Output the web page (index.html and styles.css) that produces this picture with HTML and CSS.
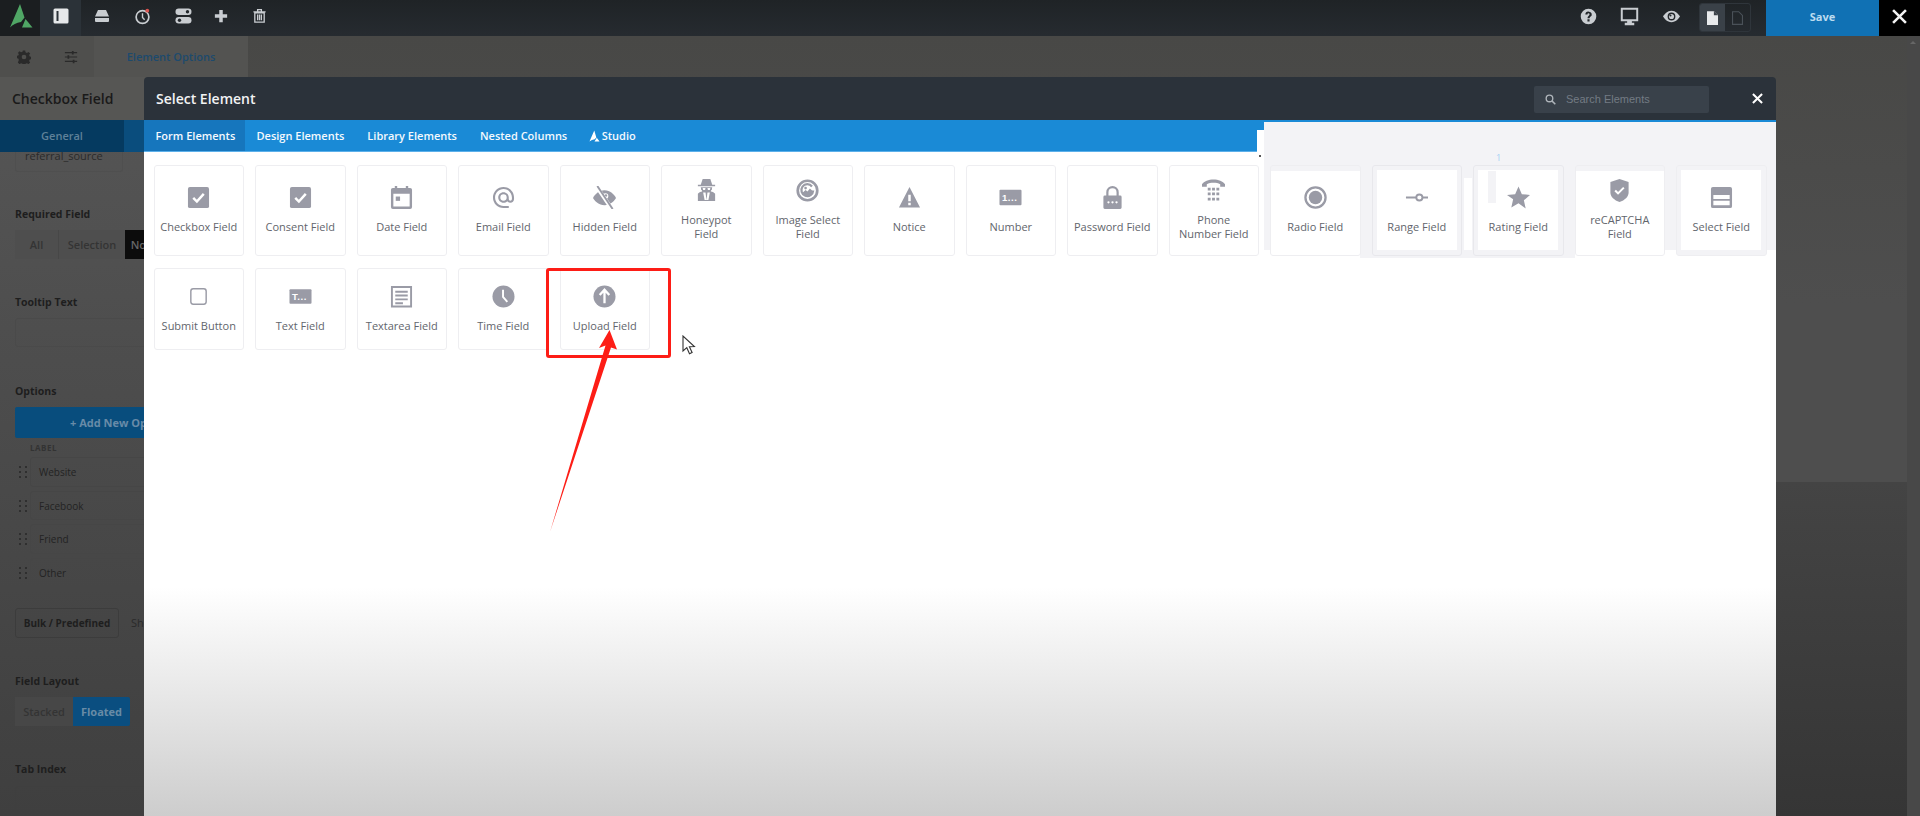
FILE: index.html
```html
<!DOCTYPE html>
<html lang="en">
<head>
<meta charset="utf-8">
<title>Select Element</title>
<link rel="stylesheet" href="styles.css">
</head>
<body>
<header class="topbar">
  <div class="logo-cell">
    <svg class="logo" viewBox="0 0 40 36" width="40" height="36"><path d="M20 4 24.500 17.500 21 22Q14 23 10 27.500z"/><path d="M25.500 19 32.500 27.500H22z"/></svg>
  </div>
  <div class="tool tool-active"><svg viewBox="0 0 16 16" width="16" height="16"><rect x="0.500" y="0.500" width="15" height="15" rx="1.500" fill="#e6e8ea"/><rect x="3.500" y="3" width="2" height="10" fill="#2b3238"/></svg></div>
  <div class="tool"><svg viewBox="0 0 16 16" width="16" height="16"><path fill="#c9cdd1" d="M4 2h8l3 6.500H1zM1 10h14v3a1 1 0 0 1-1 1H2a1 1 0 0 1-1-1z"/></svg></div>
  <div class="tool"><svg viewBox="0 0 16 16" width="17" height="17"><circle cx="8" cy="8.500" r="6" fill="none" stroke="#c9cdd1" stroke-width="1.600"/><path d="M8 5v4l2 2" fill="none" stroke="#c9cdd1" stroke-width="1.300"/><circle cx="12.500" cy="2.500" r="1.800" fill="#d9534f"/></svg></div>
  <div class="tool"><svg viewBox="0 0 16 16" width="17" height="16"><rect y="0.500" width="16" height="6.500" rx="3.200" fill="#c9cdd1"/><rect y="9" width="16" height="6.500" rx="3.200" fill="#c9cdd1"/><circle cx="12" cy="3.700" r="1.700" fill="#23282c"/><circle cx="4" cy="12.300" r="1.700" fill="#23282c"/></svg></div>
  <div class="tool tool-narrow tool-plus"><svg viewBox="0 0 16 16" width="14" height="14"><path fill="#c9cdd1" d="M6 1h4v5h5v4h-5v5H6v-5H1V6h5z"/></svg></div>
  <div class="tool tool-narrow"><svg viewBox="0 0 16 16" width="15" height="16"><path fill="none" stroke="#c9cdd1" stroke-width="1.400" d="M3 4.500h10v10H3zM1.500 3.500h13M6 3V1.200h4V3M6 6.500v6M8 6.500v6M10 6.500v6"/></svg></div>
  <div class="top-spacer"></div>
  <div class="top-right">
    <svg class="tr-icon" viewBox="0 0 24 24" width="17" height="17"><path fill="#c9cdd1" d="M12 1a11 11 0 1 0 0 22 11 11 0 0 0 0-22zm1.500 18h-3v-3h3zm2.800-8.200c-.9 1.100-2.800 1.700-2.800 3.700h-3c0-3.300 3-3.600 3-5.500a1.500 1.500 0 0 0-3 0h-3a4.500 4.500 0 1 1 8.800 1.800z"/></svg>
    <svg class="tr-icon" viewBox="0 0 24 24" width="19" height="19"><path fill="#c9cdd1" d="M1 1h22v17h-8v2h3v3H6v-3h3v-2H1zm2.500 2.500v12h17v-12z"/></svg>
    <svg class="tr-icon" viewBox="0 0 24 24" width="19" height="17"><path fill="#c9cdd1" d="M12 4C6 4 2 9 0 12c2 3 6 8 12 8s10-5 12-8c-2-3-6-8-12-8zm0 13.500a5.500 5.500 0 1 1 0-11 5.500 5.500 0 0 1 0 11z"/><circle cx="12" cy="12" r="3.600" fill="#c9cdd1"/><circle cx="10.500" cy="10.500" r="1.500" fill="#23282c"/></svg>
    <div class="doc-group">
      <div class="doc-cell doc-on"><svg viewBox="0 0 12 15" width="11" height="14"><path fill="#e8eaec" d="M0 0h7.500L12 4.500V15H0z"/><path fill="#3a4148" d="M7.500 0v4.500H12z"/></svg></div>
      <div class="doc-cell"><svg viewBox="0 0 12 15" width="11" height="14"><path fill="none" stroke="#4a5158" stroke-width="1.200" d="M.6.600h6.700l4.100 4.100v9.700H.6z"/></svg></div>
    </div>
  </div>
  <button class="save">Save</button>
  <div class="close-all"><svg viewBox="0 0 14 14" width="15" height="15"><path d="M1 1l12 12M13 1 1 13" stroke="#f2f2f2" stroke-width="2.400"/></svg></div>
</header>

<div class="workspace">
  <aside class="sidebar">
    <div class="side-top">
      <div class="side-ico"><svg viewBox="0 0 24 24" width="14" height="14"><path fill="#2a2a2a" d="M10 1h4l.6 3 2.500 1 2.600-1.700 2.800 2.800-1.700 2.600 1 2.500 3 .6v4l-3 .6-1 2.500 1.700 2.600-2.800 2.800-2.600-1.700-2.500 1-.6 3h-4l-.6-3-2.500-1-2.600 1.700-2.800-2.800L3.200 17l-1-2.500-3-.6v-4l3-.6 1-2.500L1.500 5.100l2.800-2.800L7 4l2.500-1zM12 8a4 4 0 1 0 0 8 4 4 0 0 0 0-8z"/></svg></div>
      <div class="side-ico"><svg viewBox="0 0 16 16" width="14" height="14"><path stroke="#2a2a2a" stroke-width="1.300" d="M1 3h14M1 8h14M1 13h14"/><path fill="#2a2a2a" d="M9 1h2v4H9zM4 6h2v4H4zM10 11h2v4h-2z"/></svg></div>
      <div class="side-tab">Element Options</div>
    </div>
    <h2 class="side-title">Checkbox Field</h2>
    <div class="side-band"><span class="band-tab">General</span><span class="band-rest"></span></div>
    <div class="side-form">
      <div class="field-name">referral_source</div>
      <div class="flabel fl-required">Required Field</div>
      <div class="seg seg-req"><span class="seg-all">All</span><span class="seg-sel">Selection</span><span class="seg-none">None</span></div>
      <div class="flabel fl-tooltip">Tooltip Text</div>
      <div class="finput fi-tooltip"></div>
      <div class="flabel fl-options">Options</div>
      <div class="add-btn">+ Add New Option</div>
      <div class="col-label">LABEL</div>
      <div class="opt-rows">
        <div class="opt"><svg class="drag" viewBox="0 0 8 12" width="8" height="12"><path fill="#2f2f2f" d="M0 0h2v2H0zM6 0h2v2H6zM0 5h2v2H0zM6 5h2v2H6zM0 10h2v2H0zM6 10h2v2H6z"/></svg><span class="opt-in">Website</span></div>
        <div class="opt"><svg class="drag" viewBox="0 0 8 12" width="8" height="12"><path fill="#2f2f2f" d="M0 0h2v2H0zM6 0h2v2H6zM0 5h2v2H0zM6 5h2v2H6zM0 10h2v2H0zM6 10h2v2H6z"/></svg><span class="opt-in">Facebook</span></div>
        <div class="opt"><svg class="drag" viewBox="0 0 8 12" width="8" height="12"><path fill="#2f2f2f" d="M0 0h2v2H0zM6 0h2v2H6zM0 5h2v2H0zM6 5h2v2H6zM0 10h2v2H0zM6 10h2v2H6z"/></svg><span class="opt-in">Friend</span></div>
        <div class="opt"><svg class="drag" viewBox="0 0 8 12" width="8" height="12"><path fill="#2f2f2f" d="M0 0h2v2H0zM6 0h2v2H6zM0 5h2v2H0zM6 5h2v2H6zM0 10h2v2H0zM6 10h2v2H6z"/></svg><span class="opt-in">Other</span></div>
      </div>
      <div class="bulk-row"><span class="bulk">Bulk / Predefined</span><span class="bulk-more">Show</span></div>
      <div class="flabel fl-layout">Field Layout</div>
      <div class="seg seg-layout"><span class="seg-stacked">Stacked</span><span class="seg-floated">Floated</span></div>
      <div class="flabel fl-tab">Tab Index</div>
      <div class="finput fi-tab"></div>
    </div>
  </aside>

  <main class="canvas">
    <div class="canvas-main">
      <div class="canvas-upper"></div>
      <div class="canvas-lower"></div>
    </div>
    <div class="canvas-track"><span class="track-arrow"></span></div>
  </main>

  <section class="modal">
    <div class="modal-head">
      <h1 class="modal-title">Select Element</h1>
      <div class="search">
        <svg viewBox="0 0 16 16" width="11" height="11"><circle cx="6.500" cy="6.500" r="4.800" fill="none" stroke="#aeb4ba" stroke-width="2"/><path d="M10 10l5 5" stroke="#aeb4ba" stroke-width="2.200"/></svg>
        <span class="search-text">Search Elements</span>
      </div>
      <svg class="modal-x" viewBox="0 0 12 12" width="11" height="11"><path d="M1 1l10 10M11 1 1 11" stroke="#fff" stroke-width="2.200"/></svg>
    </div>
    <nav class="tabs">
      <span class="tab tab-active">Form Elements</span>
      <span class="tab">Design Elements</span>
      <span class="tab">Library Elements</span>
      <span class="tab">Nested Columns</span>
      <span class="tab tab-studio"><svg viewBox="0 0 24 24" width="11" height="12"><path fill="#fff" d="M11.500 0 16 15 12.500 19Q6 20 1 24zM17 16l6 8H12z"/></svg>Studio</span>
    </nav>

    <div class="glitch glitch-main"></div>
    <div class="glitch glitch-low"></div>
    <div class="glitch-white glitch-tabend"></div>
    <div class="glitch-white glitch-gap"></div>
    <div class="glitch-speck"></div>
    <div class="glitch-one">1</div>

    <div class="modal-body">
      <div class="grid">
        <div class="card"><svg viewBox="0 0 24 24"><rect x="1" y="1" width="22" height="22" rx="2" fill="#9a9ba6"/><path d="M6.500 12.500l3.800 3.700 7.200-8" fill="none" stroke="#fff" stroke-width="2.600"/></svg><span class="label">Checkbox Field</span></div>
        <div class="card"><svg viewBox="0 0 24 24"><rect x="1" y="1" width="22" height="22" rx="2" fill="#9a9ba6"/><path d="M6.500 12.500l3.800 3.700 7.200-8" fill="none" stroke="#fff" stroke-width="2.600"/></svg><span class="label">Consent Field</span></div>
        <div class="card"><svg viewBox="0 0 24 24"><path fill="#9a9ba6" fill-rule="evenodd" d="M5 0h2.500v2h9V0H19v2h2a2 2 0 0 1 2 2v18a2 2 0 0 1-2 2H3a2 2 0 0 1-2-2V4a2 2 0 0 1 2-2h2zM3.500 8v13.500h17V8z"/><rect x="6" y="11" width="4.500" height="4.500" fill="#9a9ba6"/></svg><span class="label">Date Field</span></div>
        <div class="card"><svg viewBox="0 0 24 24"><path fill="#9a9ba6" d="M12 1C5.900 1 1 5.900 1 12s4.900 11 11 11h5.500v-2.200H12c-4.800 0-8.800-4-8.800-8.800s4-8.800 8.800-8.800 8.800 4 8.800 8.800v1.600c0 .9-.8 1.700-1.700 1.700s-1.600-.8-1.600-1.700V12c0-3-2.500-5.500-5.500-5.500S6.500 9 6.500 12s2.500 5.500 5.500 5.500c1.500 0 2.900-.6 3.900-1.600.7 1 1.900 1.600 3.200 1.600 2.200 0 3.900-1.700 3.900-3.900V12c0-6.100-4.900-11-11-11zm0 14.300a3.300 3.300 0 1 1 0-6.600 3.300 3.300 0 0 1 0 6.600z"/></svg><span class="label">Email Field</span></div>
        <div class="card"><svg viewBox="0 0 24 24"><path fill="#9a9ba6" d="M12 4.500C6 4.500 2 9 0 12.500c2 3.500 6 7.500 12 7.500s10-4 12-7.500C22 9 18 4.500 12 4.500z"/><circle cx="13" cy="10.500" r="3" fill="#fff"/><circle cx="13.500" cy="10" r="1.300" fill="#9a9ba6"/><path d="M4 1l15 22" stroke="#fff" stroke-width="4"/><path d="M4.500 0l16 24" stroke="#9a9ba6" stroke-width="2"/></svg><span class="label">Hidden Field</span></div>
        <div class="card"><svg viewBox="0 0 24 24"><path fill="#9a9ba6" d="M8 0h8l2 6h3v1.500H3V6h3zM6 8.500h12l-.5 3H17l-.5 1.500c2 .2 3.500 1 4.500 2.500V23H3v-7.500c1-1.500 2.500-2.300 4.500-2.500L7 11.500h-.5z"/><path fill="#fff" d="M8 9.500h3l-.5 2H8.500zM13 9.500h3l-.5 2h-2zM8.500 14h2.500l1 8H10zM15.500 14H13l-1 8h2z"/></svg><span class="label">Honeypot<br>Field</span></div>
        <div class="card"><svg viewBox="0 0 24 24"><circle cx="12" cy="12" r="10.200" fill="none" stroke="#9a9ba6" stroke-width="2.800"/><path fill="none" stroke="#9a9ba6" stroke-width="2.300" d="M18 12a6.200 6.200 0 1 1-1.300-4.200"/><path fill="#9a9ba6" d="M6.500 14.500l3.500-3 2 1.500 2.500-3L18 13c-.5 3-3 5.500-6 5.500-2.500 0-4.500-1.600-5.500-4z"/><circle cx="10" cy="9.500" r="1.400" fill="#9a9ba6"/></svg><span class="label">Image Select<br>Field</span></div>
        <div class="card"><svg viewBox="0 0 24 24"><path fill="#9a9ba6" d="M12 1 1 22.500h22zM10.700 9h2.600v7h-2.600zm0 8.500h2.600v2.500h-2.600z" fill-rule="evenodd"/></svg><span class="label">Notice</span></div>
        <div class="card"><svg viewBox="0 0 24 24"><rect x="0.500" y="4" width="23" height="16" rx="1" fill="#9a9ba6"/><text class="icon-txt" x="3" y="16" >1...</text></svg><span class="label">Number</span></div>
        <div class="card"><svg viewBox="0 0 24 24"><path fill="#9a9ba6" fill-rule="evenodd" d="M12 0a6.500 6.500 0 0 1 6.500 6.500V10H20a1.500 1.500 0 0 1 1.500 1.500v11A1.500 1.500 0 0 1 20 24H4a1.500 1.500 0 0 1-1.500-1.500v-11A1.500 1.500 0 0 1 4 10h1.500V6.500A6.500 6.500 0 0 1 12 0zm0 2.300A4.200 4.200 0 0 0 7.800 6.500V10h8.400V6.500A4.200 4.200 0 0 0 12 2.300z"/><circle cx="7.800" cy="17" r="1.200" fill="#fff"/><circle cx="12" cy="17" r="1.200" fill="#fff"/><circle cx="16.200" cy="17" r="1.200" fill="#fff"/></svg><span class="label">Password Field</span></div>
        <div class="card"><svg viewBox="0 0 24 24"><path fill="#9a9ba6" d="M0 8V5.500C2 2.500 7 .5 12 .5s10 2 12 5V8h-5V5.500C17 4.500 14.500 4 12 4s-5 .5-7 1.500V8z"/><path fill="#9a9ba6" d="M6 9h3v3H6zm4.500 0h3v3h-3zM15 9h3v3h-3zM6 14h3v3H6zm4.500 0h3v3h-3zM15 14h3v3h-3zM6 19.500h3v3H6zm9 0h3v3h-3zm-4.500 0h3v3h-3z"/></svg><span class="label">Phone<br>Number Field</span></div>
        <div class="card card-radio"><svg viewBox="0 0 24 24"><circle cx="12" cy="12" r="10.500" fill="none" stroke="#9a9ba6" stroke-width="2.400"/><circle cx="12" cy="12" r="7" fill="#9a9ba6"/></svg><span class="label">Radio Field</span></div>
        <div class="card card-inset"><svg viewBox="0 0 24 24"><path d="M1 12h23" stroke="#9a9ba6" stroke-width="2"/><circle cx="15" cy="12" r="3.200" fill="#fff" stroke="#9a9ba6" stroke-width="2"/></svg><span class="label">Range Field</span></div>
        <div class="card card-inset card-rating"><svg viewBox="0 0 24 24"><path fill="#9a9ba6" d="M12 .5l3.500 8 8.500.8-6.400 5.600 1.900 8.500L12 18l-7.500 4.400 1.900-8.500L0 9.300l8.500-.8z"/></svg><span class="label">Rating Field</span></div>
        <div class="card card-top"><svg viewBox="0 0 24 24"><path fill="#9a9ba6" d="M12 0l9.500 3v11c0 4.500-4 8-9.500 10C6.500 22 2.500 18.500 2.500 14V3z"/><path d="M7.500 12l3 3 6-6" fill="none" stroke="#fff" stroke-width="2.200"/></svg><span class="label">reCAPTCHA<br>Field</span></div>
        <div class="card card-inset card-select"><svg viewBox="0 0 24 24"><path fill="#9a9ba6" fill-rule="evenodd" d="M3 1h18a2 2 0 0 1 2 2v18a2 2 0 0 1-2 2H3a2 2 0 0 1-2-2V3a2 2 0 0 1 2-2zM3.500 9.500v4h17v-4zm0 6v4.500h17v-4.500z"/></svg><span class="label">Select Field</span></div>

        <div class="card"><svg viewBox="0 0 24 24"><rect x="5" y="5" width="16" height="16" rx="2.500" transform="translate(-1 -1)" fill="none" stroke="#9a9ba6" stroke-width="1.500"/></svg><span class="label">Submit Button</span></div>
        <div class="card"><svg viewBox="0 0 24 24"><rect x="0.500" y="4.500" width="23" height="15" rx="1" fill="#9a9ba6"/><text class="icon-txt" x="3" y="16">T...</text></svg><span class="label">Text Field</span></div>
        <div class="card"><svg viewBox="0 0 24 24"><path fill="#9a9ba6" fill-rule="evenodd" d="M1 1h22v22.500H1zm2 2v18.500h18V3z"/><path fill="#9a9ba6" d="M5.500 6h13v2h-13zm0 4h13v2h-13zm0 4h13v2h-13zm0 4h8v2h-8z"/></svg><span class="label">Textarea Field</span></div>
        <div class="card"><svg viewBox="0 0 24 24"><circle cx="12" cy="12" r="11.500" fill="#9a9ba6"/><path d="M11.500 5v7.500l4.500 5" fill="none" stroke="#fff" stroke-width="2"/></svg><span class="label">Time Field</span></div>
        <div class="card"><svg viewBox="0 0 24 24"><circle cx="12" cy="12" r="11.500" fill="#9a9ba6"/><path d="M12 19V6M7 10.500 12 5l5 5.500" fill="none" stroke="#fff" stroke-width="2.400"/></svg><span class="label">Upload Field</span></div>
      </div>
    </div>
  </section>

  <div class="callout-box"></div>
  <svg class="callout-arrow" viewBox="0 0 80 210" width="80" height="210"><path fill="#fd1d16" d="M1 205 56.500 18.500 50 21 60.500 3 68 22.500 62 20.500z"/></svg>
  <svg class="cursor" viewBox="0 0 14 20" width="14" height="20"><path d="M1 1v15l3.800-3.300 2.700 6 2.600-1.200-2.700-5.700 5-.3z" fill="#fff" stroke="#333" stroke-width="1.100"/></svg>
</div>
</body>
</html>
```
FILE: styles.css
```css
* { box-sizing: border-box; }
html, body { margin: 0; height: 100%; }
body {
  width: 1920px;
  height: 816px;
  overflow: hidden;
  display: flex;
  flex-direction: column;
  font-family: "Open Sans", "Noto Sans", sans-serif;
  background: #444;
}

/* top bar */
.topbar {
  height: 36px;
  flex: none;
  display: flex;
  align-items: stretch;
  background: linear-gradient(#1f2326, #262b30);
}
.logo-cell { width: 40px; background: #1b1e20; display: flex; }
.logo { fill: #50a665; }
.tool {
  width: 41px;
  display: flex;
  align-items: center;
  justify-content: center;
  padding-bottom: 4px;
}
.tool-active { background: #2b3238; }
.tool-narrow { width: 38px; }
.tool-plus { margin-left: -2px; }
.top-spacer { flex: 1; }
.top-right {
  display: flex;
  align-items: center;
  padding-bottom: 4px;
}
.tr-icon { margin-right: 23px; }
.doc-group {
  display: flex;
  width: 52px;
  height: 29px;
  margin: 3px 15px 0 -5px;
  border: 1px solid #2f353b;
  border-radius: 3px;
  overflow: hidden;
}
.doc-cell { flex: 1; display: flex; align-items: center; justify-content: center; }
.doc-on { background: #3a4148; }
.save {
  width: 113px;
  border: 0;
  padding: 0 0 4px;
  background: #1071b4;
  color: #bcdcf0;
  font: 700 11px "Open Sans", sans-serif;
}
.close-all {
  width: 41px;
  background: #000;
  display: flex;
  align-items: center;
  justify-content: center;
  padding-bottom: 4px;
}

/* workspace */
.workspace {
  flex: 1;
  position: relative;
  display: flex;
  overflow: hidden;
}
.sidebar {
  width: 248px;
  flex: none;
  display: flex;
  flex-direction: column;
  background: linear-gradient(#575757, #3f3f3f);
  color: #232323;
  overflow: hidden;
}
.side-top {
  height: 41px;
  flex: none;
  display: flex;
  background: #4f4f4d;
}
.side-ico {
  width: 47px;
  display: flex;
  align-items: center;
  justify-content: center;
}
.side-tab {
  flex: 1;
  background: #535351;
  color: #1d4a6d;
  font-size: 11px;
  font-weight: 600;
  display: flex;
  align-items: center;
  justify-content: center;
}
.side-title {
  height: 43px;
  margin: 0;
  padding-left: 12px;
  flex: none;
  font-size: 14px;
  font-weight: 600;
  line-height: 44px;
  color: #1a1a1a;
  background: #565654;
}
.side-band {
  height: 32px;
  flex: none;
  display: flex;
  background: #0a4d7d;
}
.band-tab {
  width: 124px;
  background: #053a60;
  color: #5f8199;
  font-size: 11px;
  font-weight: 600;
  line-height: 32px;
  text-align: center;
}
.side-form { padding: 0 15px; width: 248px; }
.field-name {
  width: 108px;
  height: 20px;
  padding-left: 9px;
  font-size: 11px;
  line-height: 8px;
  color: #2a2a2a;
  border: 1px solid #4f4f4f;
  border-top: 0;
  border-radius: 0 0 3px 3px;
}
.flabel {
  height: 16px;
  font-size: 10.500px;
  font-weight: 700;
  line-height: 16px;
  color: #1e1e1e;
}
.fl-required { margin-top: 34px; }
.fl-tooltip { margin-top: 35px; }
.fl-options { margin-top: 36px; }
.fl-layout { margin-top: 35px; }
.fl-tab { margin-top: 35px; }
.seg {
  display: flex;
  margin-top: 8px;
  font-size: 11px;
  font-weight: 600;
  color: #343434;
  line-height: 29px;
  height: 29px;
}
.seg span { display: block; text-align: center; white-space: nowrap; overflow: hidden; }
.seg-all { width: 43px; background: #4e4e4e; }
.seg-sel { width: 67px; background: #4e4e4e; border-left: 1px solid #474747; }
.seg-none { width: 40px; background: #0c0c0c; color: #666; }
.seg-stacked { width: 58px; background: #474747; }
.seg-floated { width: 57px; background: #0a4e80; color: #688ba6; font-weight: 700; border-radius: 0 2px 2px 0; }
.finput {
  width: 210px;
  border: 1px solid #4a4a4a;
  border-radius: 3px;
}
.fi-tooltip { height: 29px; margin-top: 8px; }
.fi-tab { height: 60px; margin-top: 9px; border-color: #3f3f3f; }
.add-btn {
  margin-top: 8px;
  height: 31px;
  background: #084d7d;
  color: #688ba8;
  font-size: 11px;
  font-weight: 700;
  line-height: 31px;
  padding-left: 55px;
  border-radius: 2px;
  white-space: nowrap;
}
.col-label {
  margin: 5px 0 0 15px;
  height: 10px;
  font-size: 8px;
  line-height: 10px;
  font-weight: 700;
  letter-spacing: 0.5px;
  color: #333;
}
.opt-rows {
  margin-top: 4px;
  display: flex;
  flex-direction: column;
  gap: 4px;
}
.opt { display: flex; align-items: center; height: 29.7px; }
.drag { margin: 0 3px 0 4px; flex: none; }
.opt-in {
  flex: 1;
  height: 100%;
  padding-left: 8px;
  font-size: 10px;
  line-height: 28px;
  color: #232323;
  border: 1px solid #464646;
  border-radius: 3px;
}
.bulk-row { margin-top: 20px; display: flex; align-items: center; height: 30px; }
.bulk {
  width: 104px;
  height: 100%;
  border: 1px solid #3c3c3c;
  border-radius: 3px;
  font-size: 10px;
  font-weight: 700;
  line-height: 28px;
  text-align: center;
  white-space: nowrap;
  color: #1e1e1e;
}
.bulk-more { margin-left: 12px; font-size: 11px; color: #2a2a2a; }

/* canvas behind modal */
.canvas { flex: 1; display: flex; }
.canvas-main { flex: 1; display: flex; flex-direction: column; }
.canvas-upper { height: 446px; background: linear-gradient(#484846, #4e4e4e 60%); flex: none; }
.canvas-lower { flex: 1; background: linear-gradient(#444, #353535); }
.canvas-track { width: 13px; background: #484848; padding: 5px 0 0 3px; }
.track-arrow {
  display: block;
  width: 0;
  height: 0;
  border: 3px solid transparent;
  border-top: 0;
  border-bottom: 3px solid #666;
}

/* modal */
.modal {
  position: absolute;
  left: 144px;
  top: 41px;
  width: 1632px;
  bottom: 0;
  display: flex;
  flex-direction: column;
  border-radius: 4px 4px 0 0;
  overflow: hidden;
}
.modal-head {
  height: 43px;
  flex: none;
  display: flex;
  align-items: center;
  background: #2b323a;
  padding-left: 12px;
}
.modal-title {
  margin: 0;
  flex: 1;
  font-size: 14px;
  font-weight: 600;
  color: #f2f3f4;
}
.search {
  width: 175px;
  height: 27px;
  margin-top: 1px;
  display: flex;
  align-items: center;
  gap: 10px;
  padding-left: 11px;
  border-radius: 2px;
  background: #39414a;
}
.search-text { font: 11px "Liberation Sans", sans-serif; color: #737b84; }
.modal-x { margin: 0 13px 0 43px; }
.tabs {
  height: 32px;
  flex: none;
  display: flex;
  align-items: stretch;
  background: #1a8ad6;
  border-bottom: 1px solid #5cb0ea;
}
.tab {
  padding: 0 11.500px;
  font-size: 11px;
  font-weight: 600;
  line-height: 31px;
  color: #f4f9fd;
  white-space: nowrap;
}
.tab-active { background: #1676bd; width: 101px; }
.tab-studio { display: flex; align-items: center; gap: 2px; padding-left: 10px; }

/* rendering artifact over the right of the tab bar */
.glitch { position: absolute; background: #f3f3f6; z-index: 1; }
.glitch-main { left: 1120px; top: 45px; right: 0; height: 128px; }
.glitch-low { left: 1216px; top: 173px; width: 215px; height: 8px; }
.glitch-white { position: absolute; background: #fff; z-index: 1; }
.glitch-tabend { left: 1113px; top: 53px; width: 7px; height: 22px; }
.glitch-gap { left: 1320px; top: 101px; width: 8px; height: 72px; }
.glitch-speck {
  position: absolute;
  z-index: 1;
  left: 1115px;
  top: 78px;
  width: 2px;
  height: 2px;
  background: #555;
}
.glitch-one {
  position: absolute;
  z-index: 1;
  left: 1352px;
  top: 73px;
  font-size: 9px;
  line-height: 16px;
  color: #a5d2f5;
}

.modal-body {
  flex: 1;
  background: linear-gradient(#fff 435px, #cdcdcd 100%);
}
.grid {
  position: relative;
  z-index: 2;
  display: grid;
  grid-template-columns: repeat(16, 90.5px);
  grid-template-rows: 91.4px 82.4px;
  gap: 11.600px 11px;
  padding: 12.600px 0 0 9.500px;
}
.card {
  display: flex;
  flex-direction: column;
  align-items: center;
  justify-content: center;
  background: #fff;
  border: 1px solid #eeeef1;
  border-radius: 3px;
  text-align: center;
}
.card svg { width: 23px; height: 23px; flex: none; }
.label {
  display: block;
  margin-top: 11px;
  font-size: 11px;
  line-height: 14px;
  color: #62656c;
  white-space: nowrap;
}
.icon-txt { font: 700 10px "Liberation Sans", sans-serif; fill: #fff; letter-spacing: 0.6px; }
.card-radio, .card-top {
  background: linear-gradient(#f3f3f6 5px, #fff 5px);
}
.card-inset {
  background: linear-gradient(#fff, #fff) no-repeat center / 80px 80px #f3f3f6;
  border-color: #e8e8ec;
}
.card-select { border-color: #eeeef1; }
.card-rating {
  background:
    linear-gradient(#f3f3f6, #f3f3f6) no-repeat 14px 5px / 8px 32px,
    linear-gradient(#fff, #fff) no-repeat center / 80px 80px #f3f3f6;
}

/* annotation */
.callout-box {
  position: absolute;
  left: 546px;
  top: 232px;
  width: 125px;
  height: 90px;
  border: 3.400px solid #fd1d16;
  border-radius: 3px;
  z-index: 5;
}
.callout-arrow {
  position: absolute;
  left: 549px;
  top: 291px;
  z-index: 6;
}
.cursor {
  position: absolute;
  left: 682px;
  top: 299px;
  z-index: 6;
}
```
